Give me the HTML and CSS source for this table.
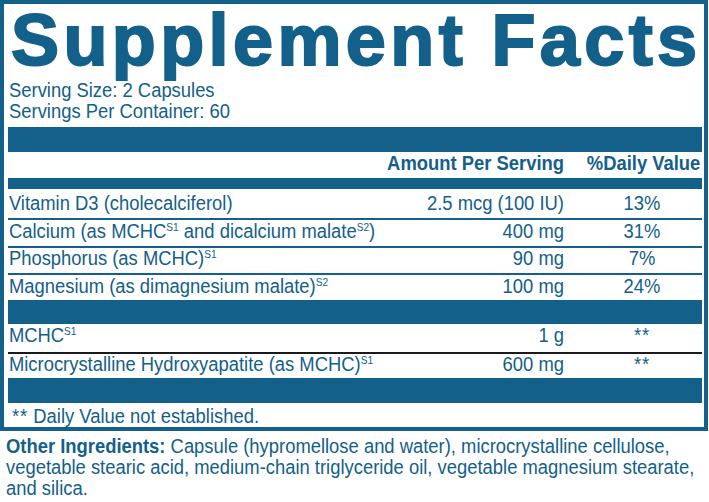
FILE: index.html
```html
<!DOCTYPE html>
<html>
<head>
<meta charset="utf-8">
<link rel="stylesheet" href="styles.css">
</head>
<body>
<div class="label">
  <h1 class="title">Supplement Facts</h1>
  <div class="serving first-serving"><span class="cond">Serving Size: 2 Capsules</span></div>
  <div class="serving"><span class="cond">Servings Per Container: 60</span></div>
  <div class="bar bar-thick"></div>
  <div class="row head">
    <span class="name"></span>
    <span class="amt">Amount Per Serving</span>
    <span class="dv">%Daily Value</span>
  </div>
  <div class="bar bar-thin"></div>
  <div class="row item r-vit">
    <span class="name">Vitamin D3 (cholecalciferol)</span>
    <span class="amt">2.5 mcg (100 IU)</span>
    <span class="dv">13%</span>
  </div>
  <div class="row item r-cal">
    <span class="name">Calcium (as MCHC<sup>S1</sup> and dicalcium malate<sup>S2</sup>)</span>
    <span class="amt">400 mg</span>
    <span class="dv">31%</span>
  </div>
  <div class="row item r-pho">
    <span class="name">Phosphorus (as MCHC)<sup>S1</sup></span>
    <span class="amt">90 mg</span>
    <span class="dv">7%</span>
  </div>
  <div class="row item r-mag">
    <span class="name">Magnesium (as dimagnesium malate)<sup>S2</sup></span>
    <span class="amt">100 mg</span>
    <span class="dv">24%</span>
  </div>
  <div class="bar bar-mid"></div>
  <div class="row item r-mchc">
    <span class="name">MCHC<sup>S1</sup></span>
    <span class="amt">1 g</span>
    <span class="dv star">**</span>
  </div>
  <div class="row item r-micro">
    <span class="name">Microcrystalline Hydroxyapatite (as MCHC)<sup>S1</sup></span>
    <span class="amt">600 mg</span>
    <span class="dv star">**</span>
  </div>
  <div class="bar bar-low"></div>
  <div class="note"><span class="cond"><span class="star">**</span> Daily Value not established.</span></div>
</div>
<div class="other-wrap">
  <p class="other"><b>Other Ingredients:</b> Capsule (hypromellose and water), microcrystalline cellulose, vegetable stearic acid, medium-chain triglyceride oil, vegetable magnesium stearate, and silica.</p>
</div>
</body>
</html>
```
FILE: styles.css
```css
html, body {
  margin: 0;
  padding: 0;
  background: #fff;
  overflow: hidden;
}
body {
  width: 709px;
  color: #13608a;
  font-family: "Liberation Sans", Arial, sans-serif;
  font-size: 20px;
}
.label {
  box-sizing: border-box;
  width: 708px;
  border: 4px solid #13608a;
  padding: 0 2px 0 4px;
}
.title {
  margin: 0;
  font-weight: bold;
  font-size: 72px;
  line-height: 72px;
  letter-spacing: 4.4px;
  -webkit-text-stroke: 2px #13608a;
  padding-left: 3px;
  white-space: nowrap;
}
.cond {
  display: inline-block;
  transform: scaleX(0.92);
  transform-origin: left center;
  white-space: nowrap;
}
.serving {
  line-height: 21px;
  padding-left: 1px;
}
.first-serving { margin-top: 4px; }
.bar { background: #13608a; }
.bar-thick { height: 25px; margin-top: 5px; }
.bar-thin { height: 11px; }
.bar-mid { height: 24px; }
.bar-low { height: 25px; }
.row {
  box-sizing: border-box;
  display: grid;
  grid-template-columns: minmax(0, 1fr) 240px 120px;
  align-items: end;
  line-height: 20px;
  white-space: nowrap;
}
.row .name {
  padding-left: 1px;
  transform: scaleX(0.92);
  transform-origin: left center;
}
.row .amt {
  text-align: right;
  margin-right: 18px;
  transform: scaleX(0.92);
  transform-origin: right center;
}
.row .dv {
  text-align: center;
  transform: scaleX(0.92);
  transform-origin: center center;
}
.head {
  height: 26px;
  padding-bottom: 5px;
  font-weight: bold;
}
.item { border-bottom: 2px solid #13608a; }
.r-vit { height: 31px; padding-bottom: 5px; }
.r-cal { height: 28px; padding-bottom: 5px; }
.r-pho { height: 27px; padding-bottom: 6px; }
.r-mag { height: 25px; padding-bottom: 4px; border-bottom: none; }
.r-mchc { height: 30px; padding-bottom: 7px; border-bottom-color: #1a1a1a; }
.r-micro { height: 24px; padding-bottom: 5px; border-bottom: none; }
sup {
  font-size: 11px;
  line-height: 0;
  vertical-align: 7px;
}
.star { letter-spacing: 1px; }
.note {
  height: 24px;
  line-height: 20px;
  padding: 3px 0 0 4px;
  box-sizing: border-box;
}
.other-wrap {
  width: 700px;
  overflow: hidden;
}
.other {
  margin: 5px 0 0 6px;
  width: 756px;
  line-height: 21px;
  transform: scaleX(0.92);
  transform-origin: left top;
}
.other b { font-weight: bold; }
```
